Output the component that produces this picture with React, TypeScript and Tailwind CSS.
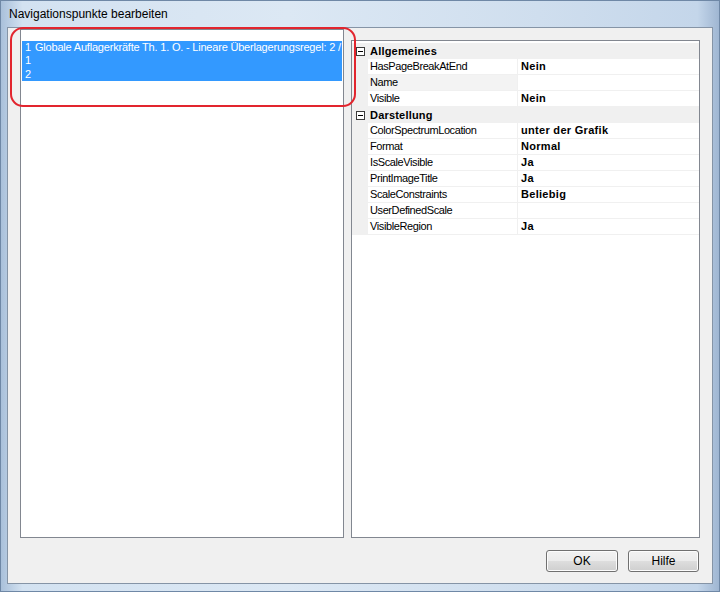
import React from 'react';

type Row =
  | { kind: 'category'; label: string }
  | { kind: 'prop'; label: string; value?: string; selected?: boolean };

// Property grid contents, grouped by category
const rows: Row[] = [
  { kind: 'category', label: 'Allgemeines' },
  { kind: 'prop', label: 'HasPageBreakAtEnd', value: 'Nein' },
  { kind: 'prop', label: 'Name', selected: true },
  { kind: 'prop', label: 'Visible', value: 'Nein' },
  { kind: 'category', label: 'Darstellung' },
  { kind: 'prop', label: 'ColorSpectrumLocation', value: 'unter der Grafik' },
  { kind: 'prop', label: 'Format', value: 'Normal' },
  { kind: 'prop', label: 'IsScaleVisible', value: 'Ja' },
  { kind: 'prop', label: 'PrintImageTitle', value: 'Ja' },
  { kind: 'prop', label: 'ScaleConstraints', value: 'Beliebig' },
  { kind: 'prop', label: 'UserDefinedScale' },
  { kind: 'prop', label: 'VisibleRegion', value: 'Ja' },
];

const listItems = [
  { num: '1', text: 'Globale Auflagerkräfte Th. 1. O. - Lineare Überlagerungsregel: 2 / LK 1' },
  { num: '1', text: '' },
  { num: '2', text: '' },
];

const MinusBox: React.FC = () => (
  <div className="w-[9px] h-[9px] border border-[#3c3c3c] bg-white flex items-center justify-center">
    <div className="w-[5px] h-px bg-black" />
  </div>
);

const PropertyRow: React.FC<{ row: Row }> = ({ row }) => {
  if (row.kind === 'category') {
    return (
      <div className="flex h-[16px] bg-[#f0f0f0]">
        <div className="w-[16px] flex items-center justify-center pl-[1px]">
          <MinusBox />
        </div>
        <div className="pl-[2px] flex items-center font-bold text-[11px] text-black tracking-[0.2px]">
          {row.label}
        </div>
      </div>
    );
  }
  return (
    <div className="flex h-[16px]">
      <div className="w-[16px] bg-[#f0f0f0]" />
      <div
        className={`w-[149px] pl-[2px] flex items-center text-[11px] text-black tracking-[-0.4px] border-b border-[#f0f0f0] ${
          row.selected ? 'bg-[#f3f3f3]' : 'bg-white'
        }`}
      >
        {row.label}
      </div>
      <div className="w-px bg-[#f0f0f0]" />
      <div className="flex-1 pl-[3px] flex items-center font-bold text-[11px] text-black tracking-[0.3px] border-b border-[#f0f0f0] bg-white">
        {row.value}
      </div>
    </div>
  );
};

const DialogButton: React.FC<{ label: string; width: string }> = ({ label, width }) => (
  <button
    className={`${width} h-[22px] rounded-[3px] border border-[#707070] text-[12px] text-black bg-[linear-gradient(to_bottom,#f2f2f2_0%,#ebebeb_48%,#dddddd_52%,#cfcfcf_100%)] shadow-[inset_0_0_0_1px_#fcfcfc]`}
  >
    {label}
  </button>
);

export default function App() {
  return (
    <div className="relative w-[720px] h-[592px] overflow-hidden border border-[#6f88a6] bg-[linear-gradient(to_right,#a9c0da_0%,#d3e2f1_3%,#dce8f4_40%,#cfdeee_75%,#c4d6ea_97%,#9fb6d2_100%)] font-['Liberation_Sans',Arial,sans-serif] flex flex-col">
      {/* title bar */}
      <div className="h-[26px] pl-[8px] flex items-center text-[12px] text-black">
        Navigationspunkte bearbeiten
      </div>

      {/* client area */}
      <div className="mx-[6px] mb-[7px] flex-1 flex flex-col bg-[#f0f0f0] border border-[#8594a6]">
        <div className="flex pl-[12px] gap-[7px]">
          {/* navigation points list */}
          <div className="w-[324px] h-[509px] mt-px border border-[#828790] bg-white pt-[11px] px-px overflow-hidden">
            <div className="bg-[#3399ff] text-white text-[11px] tracking-[-0.2px]">
              {listItems.map((item, i) => (
                <div key={i} className="h-[13.34px] leading-[13px] flex whitespace-nowrap">
                  <span className="w-[13px] shrink-0 pl-[3px]">{item.num}</span>
                  <span>{item.text}</span>
                </div>
              ))}
            </div>
          </div>

          {/* property grid */}
          <div className="w-[349px] h-[498px] mt-[12px] border border-[#828790] bg-white pt-[2px] overflow-hidden">
            {rows.map((row, i) => (
              <PropertyRow key={i} row={row} />
            ))}
          </div>
        </div>

        <div className="flex justify-end gap-[10px] pr-[13px] mt-[12px]">
          <DialogButton label="OK" width="w-[72px]" />
          <DialogButton label="Hilfe" width="w-[71px]" />
        </div>
      </div>

      {/* highlight marker */}
      <div className="absolute left-[9px] top-[26px] w-[346px] h-[80px] rounded-[13px] border-2 border-[#e2252e]" />
    </div>
  );
}
